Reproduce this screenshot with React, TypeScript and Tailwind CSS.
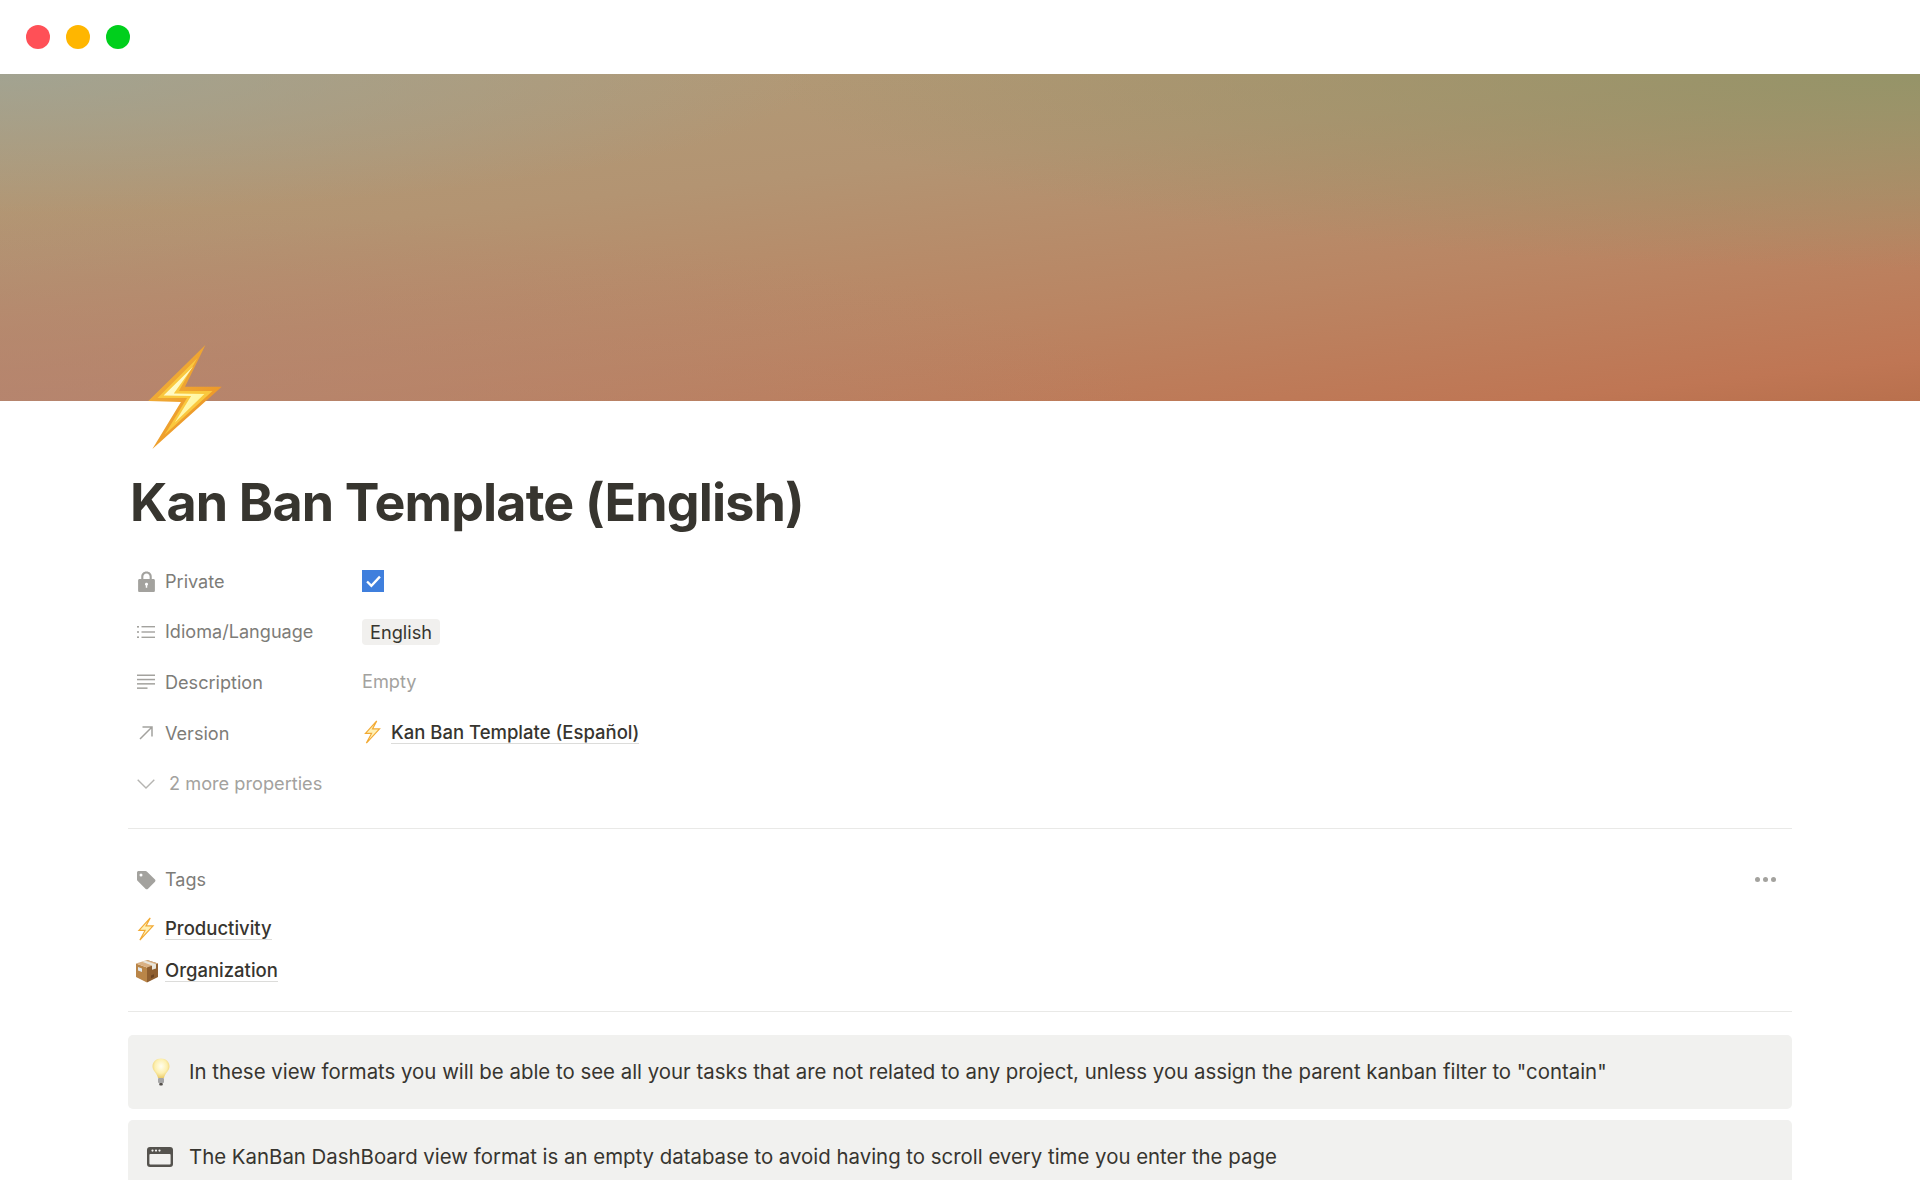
const font = { fontFamily: 'Inter, "Liberation Sans", sans-serif' };

function Bolt({ className }: { className: string }) {
  return (
    <svg viewBox="0 0 72 102" className={className}>
      <defs>
        <linearGradient id="boltEdge" x1="0" y1="0" x2="1" y2="1">
          <stop offset="0" stopColor="#f0b43c" />
          <stop offset="1" stopColor="#ec8e22" />
        </linearGradient>
        <linearGradient id="boltCore" x1="0" y1="0" x2="1" y2="1">
          <stop offset="0" stopColor="#fffde0" />
          <stop offset="1" stopColor="#fff48a" />
        </linearGradient>
      </defs>
      <path d="M56 0 L0 55 L32 56 L4 102 L72 41 L36 41 Z" fill="url(#boltEdge)" />
      <path d="M48 13 L9 52 L38 52 L16 88 L63 45 L30 45 Z" fill="#fac83e" />
      <path d="M44 21 L15 49.5 L42 50 L26 76 L55 48 L25 47.5 Z" fill="url(#boltCore)" />
    </svg>
  );
}

function SmallBolt({ className }: { className: string }) {
  return (
    <svg viewBox="0 0 72 102" className={className}>
      <path d="M54 4 L6 57 L32 57 L10 98 L66 38 L36 38 Z" fill="#fff0b4" stroke="#f2aa34" strokeWidth="5" strokeLinejoin="miter" />
    </svg>
  );
}

function Box() {
  return (
    <svg viewBox="0 0 24 24" className="w-[24px] h-[24px]">
      <path d="M12 1 L23 4.5 V18 L12 23.5 Z" fill="#8f5f30" />
      <path d="M1 4.5 L12 8.5 V23.5 L1 18 Z" fill="#b98548" />
      <path d="M12 1 L23 4.5 L12 8.5 L1 4.5 Z" fill="#d9b083" />
      <path d="M7 2.8 L17 6.6 V10.8 L21 9.4 V5.3 L10.5 1.8 Z" fill="#e8e4da" />
      <path d="M3 8 L7 9.5 V13 L3 11.4 Z" fill="#e0e6ea" />
      <path d="M16 16.5 L19 15.3 V18 L16 19.2 Z" fill="#6d4522" />
    </svg>
  );
}

function Bulb() {
  return (
    <svg viewBox="0 0 18 28" className="w-[18px] h-[28px]">
      <defs>
        <radialGradient id="bulb" cx="0.5" cy="0.4" r="0.6">
          <stop offset="0" stopColor="#fffef0" />
          <stop offset="0.6" stopColor="#fdf0b0" />
          <stop offset="1" stopColor="#ebcb68" />
        </radialGradient>
      </defs>
      <path d="M9 0.5 C4 0.5 0.5 4 0.5 8.5 C0.5 13 5 15 6 20 H12 C13 15 17.5 13 17.5 8.5 C17.5 4 14 0.5 9 0.5 Z" fill="url(#bulb)" />
      <rect x="6" y="20" width="6" height="5" rx="1" fill="#a5a5a5" />
      <rect x="7.2" y="25" width="3.6" height="2.5" rx="1" fill="#55504c" />
    </svg>
  );
}

function Lock() {
  return (
    <svg viewBox="0 0 16 20" className="w-[17px] h-[21px]">
      <path fillRule="evenodd" clipRule="evenodd" fill="#a3a29e" d="M3 7.5 V5.5 C3 2.5 5 .5 8 .5 C11 .5 13 2.5 13 5.5 V7.5 H14.6 C15.5 7.5 16 8 16 9 V18.5 C16 19.5 15.5 20 14.6 20 H1.4 C.5 20 0 19.5 0 18.5 V9 C0 8 .5 7.5 1.4 7.5 Z M5 7.5 H11 V5.5 C11 3.7 9.8 2.4 8 2.4 C6.2 2.4 5 3.7 5 5.5 Z M8 11.2 C7.1 11.2 6.5 11.8 6.5 12.6 C6.5 13.2 6.8 13.6 7.3 13.8 V16 H8.7 V13.8 C9.2 13.6 9.5 13.2 9.5 12.6 C9.5 11.8 8.9 11.2 8 11.2 Z" />
    </svg>
  );
}

function ListIcon() {
  return (
    <svg viewBox="0 0 18 14" className="w-[18px] h-[14px]" fill="#a3a29e">
      <rect x="0" y="1" width="2" height="1.6" />
      <rect x="0" y="6.2" width="2" height="1.6" />
      <rect x="0" y="11.4" width="2" height="1.6" />
      <rect x="4.5" y="1" width="13.5" height="1.4" />
      <rect x="4.5" y="6.3" width="13.5" height="1.4" />
      <rect x="4.5" y="11.6" width="13.5" height="1.4" />
    </svg>
  );
}

function TextIcon() {
  return (
    <svg viewBox="0 0 18 16" className="w-[18px] h-[16px]" fill="#a3a29e">
      <rect x="0" y="0.5" width="18" height="1.5" />
      <rect x="0" y="4.8" width="18" height="1.5" />
      <rect x="0" y="9.1" width="18" height="1.5" />
      <rect x="0" y="13.4" width="10.5" height="1.5" />
    </svg>
  );
}

function ArrowIcon() {
  return (
    <svg viewBox="0 0 14 14" className="w-[14px] h-[14px]" fill="none" stroke="#a3a29e" strokeWidth="1.5">
      <path d="M1 13 L13 1 M3.5 1 H13 V10.5" />
    </svg>
  );
}

function Chevron() {
  return (
    <svg viewBox="0 0 18 10" className="w-[18px] h-[10px]" fill="none" stroke="#b5b4b1" strokeWidth="1.4">
      <path d="M.7 .7 L9 9 L17.3 .7" />
    </svg>
  );
}

function TagIcon() {
  return (
    <svg viewBox="0 0 20 20" className="w-[20px] h-[20px]">
      <path fillRule="evenodd" clipRule="evenodd" fill="#a3a29e" d="M1 2.5 C1 1.7 1.7 1 2.5 1 H9.5 C10 1 10.4 1.2 10.8 1.5 L19 9.6 C19.6 10.2 19.6 11.1 19 11.7 L11.8 18.9 C11.2 19.5 10.3 19.5 9.7 18.9 L1.5 10.7 C1.2 10.4 1 10 1 9.5 Z M5 3.6 A1.5 1.5 0 1 0 5 6.6 A1.5 1.5 0 1 0 5 3.6 Z" />
    </svg>
  );
}

function WindowIcon() {
  return (
    <svg viewBox="0 0 26 20" className="w-[26px] h-[20px]">
      <rect x="0" y="0" width="26" height="20" rx="3" fill="#55534e" />
      <rect x="2.4" y="7" width="21.2" height="10.6" rx="1" fill="#f1f1ef" />
      <circle cx="5.5" cy="3.6" r="1.1" fill="#f1f1ef" />
      <circle cx="9" cy="3.6" r="1.1" fill="#f1f1ef" />
      <circle cx="12.5" cy="3.6" r="1.1" fill="#f1f1ef" />
    </svg>
  );
}

function PropRow({ icon, label, children }: { icon: React.ReactNode; label: string; children: React.ReactNode }) {
  return (
    <div className="flex items-center h-[50.6px]">
      <div className="flex items-center w-[234px] shrink-0">
        <div className="w-[37px] pl-[8px] flex items-center"><div className="w-[20px] flex justify-center">{icon}</div></div>
        <span className="text-[18.1px] text-[#7d7c78]">{label}</span>
      </div>
      {children}
    </div>
  );
}

function Link({ children }: { children: React.ReactNode }) {
  return <span className="text-[18.5px] leading-[22px] font-medium text-[#37352f] border-b border-[#dcdcda]">{children}</span>;
}

export default function App() {
  return (
    <div className="w-[1920px] h-[1180px] bg-white overflow-hidden" style={font}>
      <div className="h-[74px] flex items-center gap-[16px] pl-[26px]">
        <div className="w-[24px] h-[24px] rounded-full bg-[#ff5057]" />
        <div className="w-[24px] h-[24px] rounded-full bg-[#ffb600]" />
        <div className="w-[24px] h-[24px] rounded-full bg-[#00cf1c]" />
      </div>
      <div className="h-[327px] bg-[radial-gradient(ellipse_at_0%_0%,#a0a495dd,#a0a49500_30%),radial-gradient(ellipse_at_100%_0%,#959468ff,#95946800_42%),radial-gradient(ellipse_at_0%_100%,#b58470cc,#b5847000_42%),linear-gradient(174deg,#b09c78_0%,#b39472_35%,#ba8563_66%,#bf7654_92%,#b9704d_100%)]" />
      <div className="px-[128px]">
        <div className="relative h-0">
          <div className="absolute left-[20px] top-[-56px]"><Bolt className="w-[74px] h-[104px]" /></div>
        </div>
        <h1 className="pt-[70px] pl-[2px] text-[52px] leading-[64px] font-bold text-[#37352f] tracking-[-0.86px]">Kan Ban Template (English)</h1>
        <div className="pt-[21px]">
          <PropRow icon={<Lock />} label="Private">
            <div className="w-[22px] h-[22px] bg-[#3f7fdd] flex items-center justify-center">
              <svg viewBox="0 0 14 12" className="w-[15px] h-[13px]" fill="none" stroke="white" strokeWidth="2.2"><path d="M1 6 L5 10 L13 1.5" /></svg>
            </div>
          </PropRow>
          <PropRow icon={<ListIcon />} label="Idioma/Language">
            <span className="h-[26px] px-[8px] rounded-[4px] bg-[#f1f0ee] text-[18.2px] leading-[26px] text-[#37352f]">English</span>
          </PropRow>
          <PropRow icon={<TextIcon />} label="Description">
            <span className="text-[18.2px] text-[#a3a29e] mt-[-2px]">Empty</span>
          </PropRow>
          <PropRow icon={<ArrowIcon />} label="Version">
            <div className="flex items-center gap-[8px] mt-[-2px]">
              <SmallBolt className="w-[21px] h-[24px]" />
              <Link>Kan Ban Template (Español)</Link>
            </div>
          </PropRow>
          <div className="flex items-center h-[50.6px] pl-[8px]">
            <div className="w-[20px] flex justify-center"><Chevron /></div>
            <span className="ml-[13px] text-[18.2px] text-[#a3a29e]">2 more properties</span>
          </div>
        </div>
        <div className="mt-[19px] border-t border-[#e9e9e7] h-[1px]" />
        <div className="flex items-center justify-between h-[50px] mt-[26px] pr-[16px]">
          <div className="flex items-center">
            <div className="w-[37px] pl-[8px]"><TagIcon /></div>
            <span className="text-[18px] text-[#7d7c78]">Tags</span>
          </div>
          <div className="flex gap-[3px]">
            <div className="w-[5px] h-[5px] rounded-full bg-[#a3a29e]" />
            <div className="w-[5px] h-[5px] rounded-full bg-[#a3a29e]" />
            <div className="w-[5px] h-[5px] rounded-full bg-[#a3a29e]" />
          </div>
        </div>
        <div className="flex items-center h-[42px] mt-[3px]">
          <div className="w-[37px] pl-[8px] flex"><SmallBolt className="w-[20px] h-[24px]" /></div>
          <Link>Productivity</Link>
        </div>
        <div className="flex items-center h-[42px]">
          <div className="w-[37px] pl-[7px] flex"><Box /></div>
          <Link>Organization</Link>
        </div>
        <div className="mt-[19px] border-t border-[#e9e9e7] h-[1px]" />
        <div className="mt-[23px] h-[74px] rounded-[5px] bg-[#f1f1ef] flex items-center pl-[24px]">
          <div className="w-[37px] flex"><Bulb /></div>
          <span className="text-[20.4px] mt-[1px] text-[#37352f]">In these view formats you will be able to see all your tasks that are not related to any project, unless you assign the parent kanban filter to "contain"</span>
        </div>
        <div className="mt-[11px] h-[74px] rounded-[5px] bg-[#f1f1ef] flex items-center pl-[19px]">
          <div className="w-[42px] flex"><WindowIcon /></div>
          <span className="text-[20.4px] mt-[1px] text-[#37352f]">The KanBan DashBoard view format is an empty database to avoid having to scroll every time you enter the page</span>
        </div>
      </div>
    </div>
  );
}
